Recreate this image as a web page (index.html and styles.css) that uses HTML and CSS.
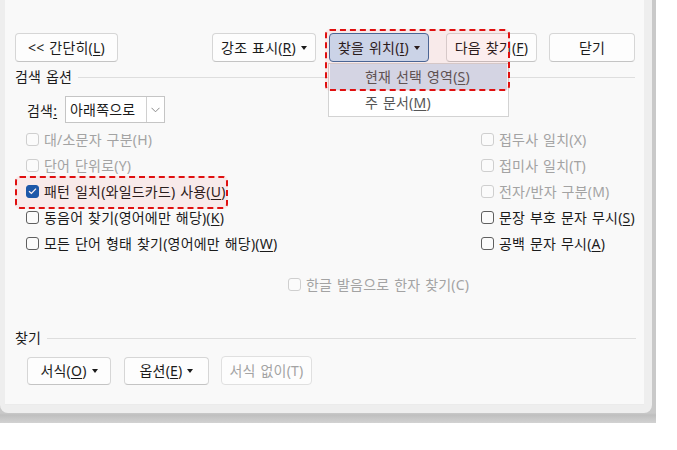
FILE: index.html
```html
<!DOCTYPE html>
<html lang="ko">
<head>
<meta charset="utf-8">
<link rel="stylesheet" href="styles.css">
</head>
<body>
<div class="backdrop">
  <div class="dialog">
    <div class="panel">
      <div class="toprow">
        <div class="btn b-less">&lt;&lt; 간단히(<u>L</u>)</div>
        <div class="btn b-hl">강조 표시(<u>R</u>)<span class="caret"></span></div>
        <div class="btn b-find">찾을 위치(<u>I</u>)<span class="caret"></span></div>
        <div class="btn b-next">다음 찾기(<u>F</u>)</div>
        <div class="btn b-close">닫기</div>
      </div>

      <div class="group-head"><span class="gh-text">검색 옵션</span><span class="rule"></span></div>

      <div class="search-row">
        <span class="search-label">검색<u>:</u></span>
        <div class="select">
          <span class="sel-val">아래쪽으로</span>
          <span class="sel-btn"><svg width="9" height="6" viewBox="0 0 9 6"><polyline points="0.5,0.8 4.5,4.8 8.5,0.8" fill="none" stroke="#8a8a8a" stroke-width="1"/></svg></span>
        </div>
      </div>

      <div class="options">
        <div class="col">
          <div class="opt disabled"><span class="cb"></span>대/소문자 구분(H)</div>
          <div class="opt disabled"><span class="cb"></span>단어 단위로(Y)</div>
          <div class="opt"><span class="cb checked"><svg width="9" height="8" viewBox="0 0 9 8"><polyline points="1,4.2 3.4,6.4 8,1.6" fill="none" stroke="#fff" stroke-width="1.3"/></svg></span>패턴 일치(와일드카드) 사용(<u>U</u>)</div>
          <div class="opt"><span class="cb"></span>동음어 찾기(영어에만 해당)(<u>K</u>)</div>
          <div class="opt"><span class="cb"></span>모든 단어 형태 찾기(영어에만 해당)(<u>W</u>)</div>
        </div>
        <div class="col">
          <div class="opt disabled"><span class="cb"></span>접두사 일치(X)</div>
          <div class="opt disabled"><span class="cb"></span>접미사 일치(T)</div>
          <div class="opt disabled"><span class="cb"></span>전자/반자 구분(M)</div>
          <div class="opt"><span class="cb"></span>문장 부호 문자 무시(<u>S</u>)</div>
          <div class="opt"><span class="cb"></span>공백 문자 무시(<u>A</u>)</div>
        </div>
      </div>

      <div class="hanja-row">
        <div class="opt disabled"><span class="cb"></span>한글 발음으로 한자 찾기(C)</div>
      </div>

      <div class="group-head find-head"><span class="gh-text">찾기</span><span class="rule"></span></div>

      <div class="bottomrow">
        <div class="btn b-fmt">서식(<u>O</u>)<span class="caret"></span></div>
        <div class="btn b-spc">옵션(<u>E</u>)<span class="caret"></span></div>
        <div class="btn b-nofmt disabled">서식 없이(T)</div>
      </div>

      <div class="menu">
        <div class="menu-item active">현재 선택 영역(<u>S</u>)</div>
        <div class="menu-item">주 문서(<u>M</u>)</div>
      </div>
      <div class="mark mark-find"></div>
      <div class="mark mark-pattern"></div>
    </div>
  </div>
</div>
</body>
</html>
```

FILE: styles.css
```css
html, body {
  margin: 0;
  padding: 0;
  background: #ffffff;
}

body {
  font-family: "Noto Sans", "Noto Sans CJK KR", sans-serif;
  font-size: 14px;
  letter-spacing: 0.2px;
  word-spacing: 1px;
  color: #1b1b1b;
}

u {
  text-decoration: underline;
  text-underline-offset: 2px;
}

.backdrop {
  width: 656px;
  height: 423px;
  background: linear-gradient(to bottom, #c9c9c9 0, #c9c9c9 413px, #bfbfbf 415px, #d2d2d2 423px);
}

.dialog {
  width: 652px;
  height: 413px;
  background: #eeeeee;
  border-radius: 0 0 8px 8px;
}

.panel {
  position: relative;
  margin-left: 5px;
  width: 639px;
  height: 404px;
  background: #f9f9f9;
  border-bottom: 1px solid #ebebeb;
}

/* buttons */
.toprow {
  display: flex;
  padding-top: 33px;
  padding-left: 10px;
}

.btn {
  box-sizing: border-box;
  height: 29px;
  display: flex;
  align-items: center;
  justify-content: center;
  background: #fdfdfd;
  border: 1px solid #d6d6d6;
  border-bottom-color: #c4c4c4;
  border-radius: 4px;
  line-height: 16px;
  white-space: nowrap;
}

.btn.disabled {
  color: #a3a3a3;
  border-color: #e0e0e0;
}

.caret {
  display: inline-block;
  width: 0;
  height: 0;
  margin-left: 5px;
  border-left: 3.5px solid transparent;
  border-right: 3.5px solid transparent;
  border-top: 4px solid #1b1b1b;
}

.b-less { width: 103px; }
.b-hl { width: 104px; margin-left: 94px; }
.b-find {
  width: 100px;
  margin-left: 13px;
  background: #c9e0f6;
  border: 1px solid #3f6a9c;
}
.b-next { width: 91px; margin-left: 17px; }
.b-close { width: 86px; margin-left: 12px; }

/* group headers */
.group-head {
  display: flex;
  align-items: center;
  height: 16px;
  margin-top: 7px;
  padding-left: 10px;
  padding-right: 9px;
  line-height: 16px;
}

.gh-text {
  margin-right: 6px;
}

.rule {
  flex: 1;
  height: 1px;
  background: #dedede;
}

.find-head {
  margin-top: 33px;
  padding-right: 8px;
}

/* search row */
.search-row {
  display: flex;
  align-items: center;
  margin-top: 11px;
  padding-left: 22px;
  height: 27px;
}

.search-label {
  width: 38px;
}

.select {
  box-sizing: border-box;
  display: flex;
  width: 100px;
  height: 27px;
  background: #ffffff;
  border: 1px solid #c5c5c5;
}

.sel-val {
  flex: 1;
  padding-left: 4px;
  line-height: 25px;
}

.sel-btn {
  width: 17px;
  border-left: 1px solid #d0d0d0;
  display: flex;
  align-items: center;
  justify-content: center;
}

/* options */
.options {
  display: grid;
  grid-template-columns: 455px auto;
  margin-top: 3px;
  padding-left: 21px;
}

.opt {
  display: flex;
  align-items: center;
  height: 26px;
  white-space: nowrap;
}

.opt.disabled {
  color: #a3a3a3;
}

.cb {
  box-sizing: border-box;
  flex: none;
  width: 13px;
  height: 13px;
  margin-right: 5px;
  border: 1px solid #5f5f5f;
  border-radius: 3px;
  background: #fbfbfb;
  display: flex;
  align-items: center;
  justify-content: center;
}

.opt.disabled .cb {
  border-color: #cfcfcf;
}

.cb.checked {
  background: #0f5cb3;
  border-color: #0f5cb3;
}

.hanja-row {
  margin-top: 15px;
  padding-left: 283px;
}

/* bottom buttons */
.bottomrow {
  display: flex;
  margin-top: 11px;
  padding-left: 22px;
}

.b-fmt { width: 84px; height: 28px; }
.b-spc { width: 85px; height: 28px; margin-left: 13px; }
.b-nofmt { width: 91px; margin-left: 12px; margin-top: -1px; }

/* dropdown menu overlay */
.menu {
  position: absolute;
  left: 323px;
  top: 63px;
  width: 181px;
  box-sizing: border-box;
  background: #ffffff;
  border: 1px solid #d3d3d3;
  z-index: 2;
}

.menu-item {
  height: 26px;
  line-height: 26px;
  padding-left: 36px;
  color: #555555;
}

.menu-item.active {
  background: #d2e1f2;
  margin: 0 1px;
  padding-left: 35px;
}

/* red dashed annotation boxes */
.mark {
  position: absolute;
  box-sizing: border-box;
  border: 2px dashed #e01010;
  border-radius: 5px;
  background: rgba(235, 40, 40, 0.07);
  z-index: 3;
}

.mark-find {
  left: 320px;
  top: 29px;
  width: 185px;
  height: 62px;
}

.mark-pattern {
  left: 10px;
  top: 176px;
  width: 213px;
  height: 33px;
}
```
